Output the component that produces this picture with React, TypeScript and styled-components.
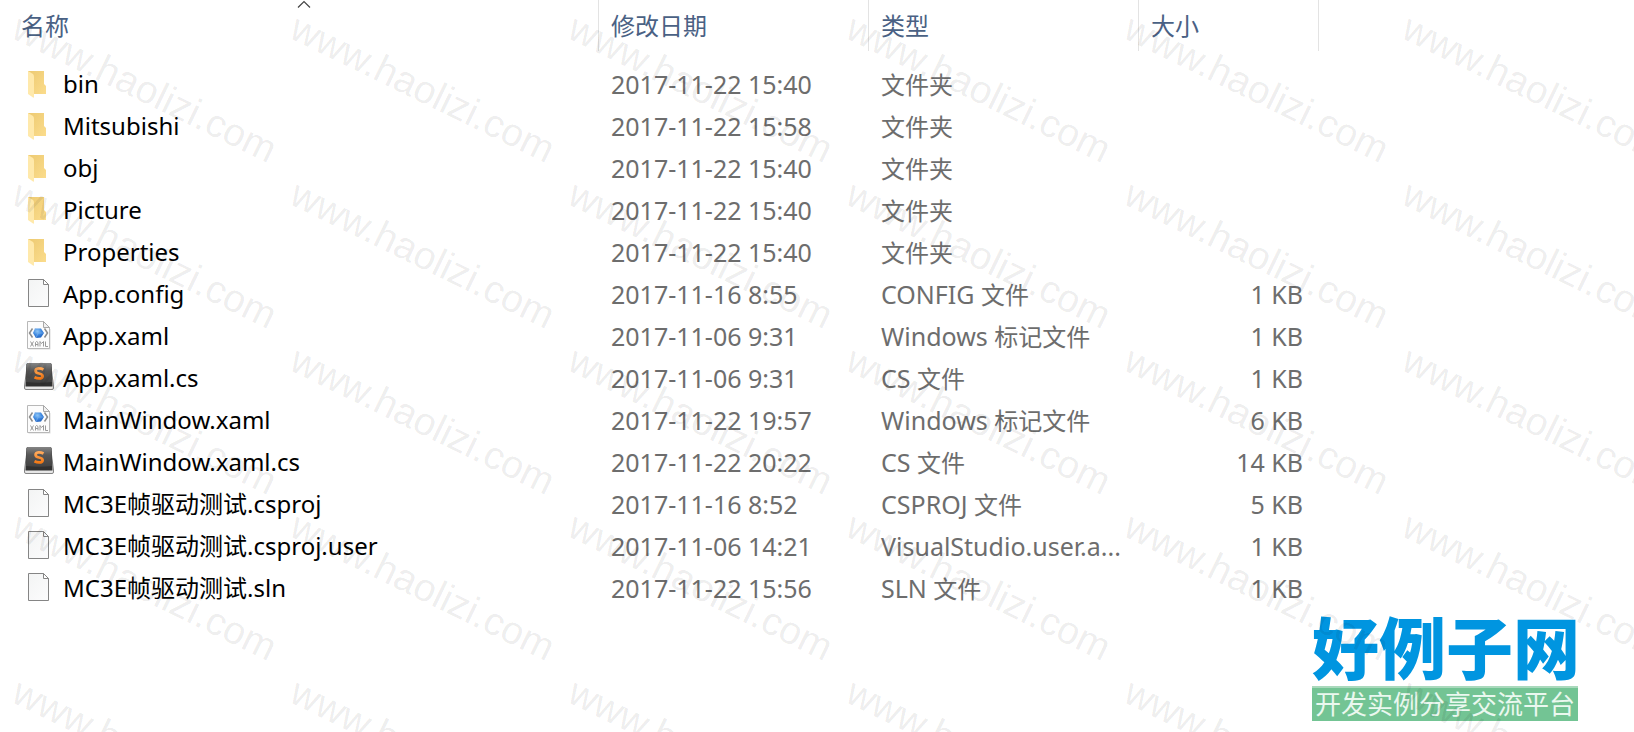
import React from 'react';
import styled, { createGlobalStyle } from 'styled-components';

const GlobalStyle = createGlobalStyle`
  body {
    margin: 0;
    background: #fff;
    font-family: 'Noto Sans', 'Noto Sans CJK SC', sans-serif;
  }
`;

const Page = styled.div`
  position: relative;
  display: flex;
  flex-direction: column;
  min-height: 100vh;
  box-sizing: border-box;
  overflow: hidden;
`;

const FileTable = styled.table`
  width: 1310px;
  margin-left: 9px;
  table-layout: fixed;
  border-collapse: separate;
  border-spacing: 0;
  font-size: 25px;
  line-height: 42px;
  color: #6d6d6d;
`;

const Col = styled.col<{ $width: number }>`
  width: ${(p) => p.$width}px;
`;

const HeadCell = styled.th`
  position: relative;
  height: 51px;
  padding: 0;
  border-right: 1px solid #e3e3e3;
  text-align: left;
`;

const SortButton = styled.button`
  display: block;
  width: 100%;
  height: 51px;
  padding: 0 12px 2px;
  border: 0;
  background: none;
  font: 400 24px/49px 'Noto Sans CJK SC', sans-serif;
  color: #4a6184;
  text-align: left;
`;

const SortMark = styled.svg`
  position: absolute;
  top: 0;
  left: 50%;
  width: 14px;
  height: 8px;
  margin-left: -7px;
`;

const Body = styled.tbody`
  &::before {
    content: '';
    display: block;
    height: 12px;
  }
`;

const Cell = styled.td<{ $right?: boolean }>`
  height: 42px;
  padding: 0 ${(p) => (p.$right ? 16 : 12)}px 0 12px;
  overflow: hidden;
  text-align: ${(p) => (p.$right ? 'right' : 'left')};
  text-overflow: ellipsis;
  white-space: nowrap;
`;

const NameBox = styled.div`
  display: flex;
  align-items: center;
  gap: 8px;
  padding-left: 2px;
  font-size: 24px;
  color: #000;
`;

const Icon = styled.svg`
  flex: none;
  width: 32px;
  height: 32px;
`;

const Han = styled.span`
  font-family: 'Noto Sans CJK SC', sans-serif;
  font-size: 24px;
  line-height: 1;
`;

const Brand = styled.footer`
  display: flex;
  flex-direction: column;
  align-self: flex-end;
  width: 266px;
  margin: auto 56px 11px 0;
  font-family: 'Noto Sans CJK SC', sans-serif;
`;

const BrandName = styled.strong`
  padding-bottom: 6px;
  font-size: 67px;
  line-height: 70px;
  font-weight: 900;
  color: #0095e0;
  white-space: nowrap;
`;

const BrandLine = styled.span`
  padding-bottom: 4px;
  border-top: 2px solid #a9d9bc;
  background: #73c494;
  font-size: 26px;
  line-height: 29px;
  color: #eaf8ef;
  text-align: center;
  white-space: nowrap;
`;

const Watermarks = styled.div`
  position: absolute;
  inset: 0 -277px 0 0;
  display: grid;
  grid-template-columns: repeat(auto-fill, 278px);
  grid-auto-rows: 166px;
  overflow: hidden;
  pointer-events: none;
`;

const Watermark = styled.span`
  padding: 4px 0 0 9px;
  font: 39px/40px 'Liberation Sans', sans-serif;
  color: rgba(0, 0, 0, 0.08);
  white-space: nowrap;
  transform: rotate(26deg);
  transform-origin: 9px 38px;
`;

type Kind = 'folder' | 'file' | 'xaml' | 'sublime';

const FolderIcon = () => (
  <Icon viewBox="0 0 32 32" aria-hidden="true">
    <defs>
      <linearGradient id="folderBack" x1="0" y1="0" x2="1" y2="1">
        <stop offset="0" stopColor="#edca72" />
        <stop offset="1" stopColor="#fbdc8c" />
      </linearGradient>
    </defs>
    <path d="M5 3H21V16L23 18V26H5Z" fill="url(#folderBack)" />
    <path d="M5 3L10 6Q11 7 11 9V29Q11 30 10 29.5L5 26Z" fill="#ffe9ab" />
  </Icon>
);

const FileIcon = () => (
  <Icon viewBox="0 0 32 32" aria-hidden="true">
    <defs>
      <linearGradient id="paper" x1="0" y1="0" x2="1" y2="1">
        <stop offset="0" stopColor="#f3f4f4" />
        <stop offset="1" stopColor="#fcfcfd" />
      </linearGradient>
    </defs>
    <path d="M5.5 1.5H20.5L25.5 6.5V28.5H5.5Z" fill="url(#paper)" stroke="#858585" />
    <path d="M20.5 1.5V6.5H25.5Z" fill="#fff" stroke="#858585" />
  </Icon>
);

const XamlIcon = () => (
  <Icon viewBox="0 0 32 32" aria-hidden="true">
    <defs>
      <radialGradient id="gem" cx="0.4" cy="0.3" r="0.8">
        <stop offset="0" stopColor="#8fc8f8" />
        <stop offset="0.5" stopColor="#3c86de" />
        <stop offset="1" stopColor="#1453b4" />
      </radialGradient>
    </defs>
    <path d="M5.5 2.5H20.5L27.5 9.5V29.5H5.5Z" fill="#dcdcdc" />
    <path d="M4.5 1.5H20.5L26.5 7.5V28.5H4.5Z" fill="#fcfcfc" stroke="#b8b8b8" />
    <path d="M20.5 1.5V7.5H26.5Z" fill="#f0f0f0" stroke="#a8a8a8" />
    <path d="M9.500 8.500L6.500 13L9.500 17.500M21.500 8.500L24.500 13L21.500 17.500" fill="none" stroke="#8b8b8b" strokeWidth="1.500" />
    <path d="M12 8.500H18L21 13L18 17.500L13 18L10 13Z" fill="url(#gem)" />
    <path d="M12 8.500L15 13L21 13M15 13L13 18" fill="none" stroke="#7fb6f0" strokeWidth="0.600" />
    <path
      d="M7.500 21.500L10.500 26.500M10.500 21.500L7.500 26.500M12.500 26.500V22.500L13.500 21.500L15 22.500V26.500M12.500 24.500H15M17 26.500V21.500L18.500 23.500L20.500 21.500V26.500M22.500 21.500V26.500H25"
      fill="none"
      stroke="#9a9a9a"
    />
  </Icon>
);

const SublimeIcon = () => (
  <Icon viewBox="0 0 32 32" aria-hidden="true">
    <defs>
      <linearGradient id="keycap" x1="0" y1="0" x2="0" y2="1">
        <stop offset="0" stopColor="#858585" />
        <stop offset="0.4" stopColor="#575757" />
        <stop offset="1" stopColor="#424242" />
      </linearGradient>
      <linearGradient id="ess" x1="0" y1="0" x2="0" y2="1">
        <stop offset="0" stopColor="#ffa95a" />
        <stop offset="1" stopColor="#f47a16" />
      </linearGradient>
    </defs>
    <path d="M4 5L1.500 24V26Q1.500 27.500 3 27.500H29Q30.500 27.500 30.500 26V24L28 5Z" fill="#e6e6e6" stroke="#858585" />
    <path d="M5 1H27Q28.500 1 28.600 2.500L29.500 24.500H2.500L3.400 2.500Q3.500 1 5 1Z" fill="#303030" />
    <path d="M5 1H27Q28.500 1 28.600 2.500L29 20Q16 21.500 3 20L3.400 2.500Q3.500 1 5 1Z" fill="url(#keycap)" />
    <path
      d="M20.500 7.500Q18 6.200 15.500 6.400Q12.500 6.700 12.600 9Q12.700 10.800 16 11.500Q19.700 12.300 19.600 14.300Q19.400 16.400 16.200 16.400Q13.700 16.400 11.500 15.200"
      fill="none"
      stroke="url(#ess)"
      strokeWidth="2.800"
    />
  </Icon>
);

const icons: Record<Kind, React.FC> = {
  folder: FolderIcon,
  file: FileIcon,
  xaml: XamlIcon,
  sublime: SublimeIcon,
};

const columns = [
  { label: '名称', width: 590, sorted: true },
  { label: '修改日期', width: 270 },
  { label: '类型', width: 270 },
  { label: '大小', width: 180 },
];

const files: { kind: Kind; name: string; date: string; type: string; size?: string }[] = [
  { kind: 'folder', name: 'bin', date: '2017-11-22 15:40', type: '文件夹' },
  { kind: 'folder', name: 'Mitsubishi', date: '2017-11-22 15:58', type: '文件夹' },
  { kind: 'folder', name: 'obj', date: '2017-11-22 15:40', type: '文件夹' },
  { kind: 'folder', name: 'Picture', date: '2017-11-22 15:40', type: '文件夹' },
  { kind: 'folder', name: 'Properties', date: '2017-11-22 15:40', type: '文件夹' },
  { kind: 'file', name: 'App.config', date: '2017-11-16 8:55', type: 'CONFIG 文件', size: '1 KB' },
  { kind: 'xaml', name: 'App.xaml', date: '2017-11-06 9:31', type: 'Windows 标记文件', size: '1 KB' },
  { kind: 'sublime', name: 'App.xaml.cs', date: '2017-11-06 9:31', type: 'CS 文件', size: '1 KB' },
  { kind: 'xaml', name: 'MainWindow.xaml', date: '2017-11-22 19:57', type: 'Windows 标记文件', size: '6 KB' },
  { kind: 'sublime', name: 'MainWindow.xaml.cs', date: '2017-11-22 20:22', type: 'CS 文件', size: '14 KB' },
  { kind: 'file', name: 'MC3E帧驱动测试.csproj', date: '2017-11-16 8:52', type: 'CSPROJ 文件', size: '5 KB' },
  { kind: 'file', name: 'MC3E帧驱动测试.csproj.user', date: '2017-11-06 14:21', type: 'VisualStudio.user.a...', size: '1 KB' },
  { kind: 'file', name: 'MC3E帧驱动测试.sln', date: '2017-11-22 15:56', type: 'SLN 文件', size: '1 KB' },
];

/* Sets the Chinese runs of a string in their own face and size. */
const MixedText = ({ text }: { text: string }) => (
  <span>
    {text
      .split(/([\u4e00-\u9fff]+)/)
      .filter(Boolean)
      .map((run, i) => (/[\u4e00-\u9fff]/.test(run) ? <Han key={i}>{run}</Han> : run))}
  </span>
);

export default function App() {
  return (
    <Page>
      <GlobalStyle />
      <FileTable>
        <colgroup>
          {columns.map((c) => (
            <Col key={c.label} $width={c.width} />
          ))}
        </colgroup>
        <thead>
          <tr>
            {columns.map((c) => (
              <HeadCell key={c.label} scope="col" aria-sort={c.sorted ? 'ascending' : undefined}>
                <SortButton type="button">{c.label}</SortButton>
                {c.sorted && (
                  <SortMark viewBox="0 0 14 8" aria-hidden="true">
                    <path d="M1 7.500L7 1.500L13 7.500" fill="none" stroke="#444" strokeWidth="1.200" />
                  </SortMark>
                )}
              </HeadCell>
            ))}
          </tr>
        </thead>
        <Body>
          {files.map((f) => {
            const KindIcon = icons[f.kind];
            return (
              <tr key={f.name}>
                <Cell>
                  <NameBox>
                    <KindIcon />
                    <MixedText text={f.name} />
                  </NameBox>
                </Cell>
                <Cell>{f.date}</Cell>
                <Cell>
                  <MixedText text={f.type} />
                </Cell>
                <Cell $right>{f.size}</Cell>
              </tr>
            );
          })}
        </Body>
      </FileTable>
      <Brand>
        <BrandName>好例子网</BrandName>
        <BrandLine>开发实例分享交流平台</BrandLine>
      </Brand>
      <Watermarks aria-hidden="true">
        {Array.from({ length: 60 }, (_, i) => (
          <Watermark key={i}>www.haolizi.com</Watermark>
        ))}
      </Watermarks>
    </Page>
  );
}
